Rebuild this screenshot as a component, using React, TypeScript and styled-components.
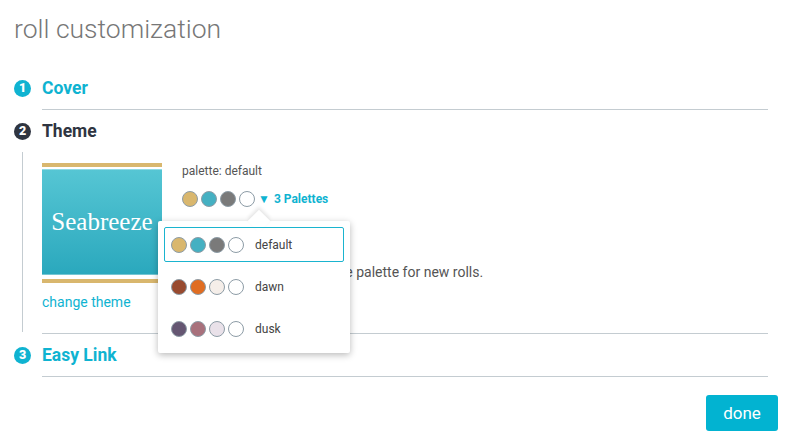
import React from 'react'
import styled, { createGlobalStyle } from 'styled-components'

const GlobalStyle = createGlobalStyle`
  html, body {
    margin: 0;
    padding: 0;
    background: #fff;
  }
  body {
    font-family: Roboto, "Liberation Sans", Arial, sans-serif;
    color: #444;
  }
`

const TEAL = '#0fb3d1'
const DARK = '#2f3541'
const RULE = '#c4ccd1'

const Page = styled.div`
  width: 794px;
  height: 445px;
  box-sizing: border-box;
  padding: 0 16px 0 14px;
  overflow: hidden;
`

const Title = styled.h1`
  margin: 12px 0 21px;
  font-size: 26.5px;
  line-height: 34px;
  font-weight: 300;
  color: #777;
`

const Steps = styled.div`
  margin-right: 10px;
`

const Step = styled.div`
  display: flex;
`

const Rail = styled.div`
  width: 17px;
  margin-right: 11px;
  display: flex;
  flex-direction: column;
  align-items: center;
`

const BadgeCell = styled.div`
  height: 42px;
  display: flex;
  align-items: center;
`

const Badge = styled.div<{ active?: boolean }>`
  width: 17px;
  height: 17px;
  border-radius: 50%;
  background: ${({ active }) => (active ? DARK : TEAL)};
  color: #fff;
  font-size: 12.5px;
  font-weight: 900;
  display: flex;
  align-items: center;
  justify-content: center;
  line-height: 1;
`

const RailLine = styled.div`
  flex: 1;
  width: 1px;
  background: ${RULE};
  margin-bottom: 2px;
`

const StepMain = styled.div`
  flex: 1;
  border-bottom: 1px solid ${RULE};
`

const StepTitle = styled.div<{ active?: boolean }>`
  height: 42px;
  display: flex;
  align-items: center;
  font-size: 17.5px;
  font-weight: 700;
  color: ${({ active }) => (active ? DARK : TEAL)};
`

const StepBody = styled.div`
  display: flex;
  padding: 11px 0 22px;
`

const ThemeCol = styled.div`
  width: 120px;
  margin-right: 20px;
`

const Preview = styled.div`
  height: 120px;
  display: flex;
  flex-direction: column;
`

const GoldBar = styled.div`
  height: 4px;
  background: #d9b76e;
`

const PreviewFace = styled.div`
  flex: 1;
  margin: 2px 0 4px;
  background: linear-gradient(#56c6d4, #2aa8bd);
  box-shadow: inset 0 1px 0 rgba(255, 255, 255, 0.35), inset 0 -1px 0 rgba(255, 255, 255, 0.35);
  display: flex;
  align-items: center;
  justify-content: center;
  color: #fff;
  font-family: "Liberation Serif", "DejaVu Serif", serif;
  font-size: 25px;
`

const ChangeLink = styled.a`
  display: block;
  margin-top: 10px;
  line-height: 18px;
  font-size: 14px;
  color: ${TEAL};
  text-decoration: none;
`

const PaletteCol = styled.div`
  flex: 1;
`

const PaletteLabel = styled.div`
  font-size: 12px;
  line-height: 16px;
  color: #555;
`

const Picker = styled.div`
  position: relative;
  margin-top: 12px;
  display: flex;
  align-items: center;
  height: 16px;
`

const Swatches = styled.div`
  display: flex;
  gap: 3px;
`

const Swatch = styled.span<{ color: string }>`
  width: 16px;
  height: 16px;
  box-sizing: border-box;
  border-radius: 50%;
  border: 1px solid #8d9ca6;
  background: ${({ color }) => color};
`

const Toggle = styled.span`
  margin-left: 3px;
  display: flex;
  align-items: center;
  gap: 4px;
  color: ${TEAL};
  font-size: 12px;
  font-weight: 700;
`

const Caret = styled.span`
  font-size: 12px;
`

const Description = styled.p`
  margin: 56px 0 0;
  font-size: 14px;
  line-height: 18px;
  color: #555;
`

const Popup = styled.div`
  position: absolute;
  left: -24px;
  top: 30px;
  width: 192px;
  box-sizing: border-box;
  padding: 6px 6px 7px;
  background: #fff;
  border-radius: 2px;
  box-shadow: 0 2px 7px rgba(0, 0, 0, 0.28);
  display: flex;
  flex-direction: column;
  gap: 7px;
  z-index: 2;

  &::before {
    content: '';
    position: absolute;
    left: 93px;
    top: -8px;
    width: 16px;
    height: 16px;
    background: #fff;
    transform: rotate(45deg);
    box-shadow: -2px -2px 4px rgba(0, 0, 0, 0.1);
  }
`

const Option = styled.div<{ selected?: boolean }>`
  position: relative;
  height: 35px;
  box-sizing: border-box;
  padding-left: 6px;
  display: flex;
  align-items: center;
  border: 1px solid ${({ selected }) => (selected ? '#1ab4cf' : 'transparent')};
  border-radius: 2px;
  font-size: 12px;
  color: #444;
`

const OptionName = styled.span`
  margin-left: 11px;
`

const ActionRow = styled.div`
  display: flex;
  justify-content: flex-end;
  margin-top: 18px;
`

const DoneButton = styled.button`
  width: 72px;
  height: 36px;
  border: none;
  border-radius: 3px;
  background: #02b3d1;
  color: #fff;
  font-family: Roboto, "Liberation Sans", sans-serif;
  font-size: 17px;
`

const palettes = [
  { name: 'default', colors: ['#d9b76e', '#45b0c2', '#7a7a7a', '#fff'] },
  { name: 'dawn', colors: ['#984a2f', '#e06d22', '#f5eee9', '#fff'] },
  { name: 'dusk', colors: ['#655672', '#a8717c', '#e9e1e9', '#fff'] },
]

function SwatchSet({ colors }: { colors: string[] }) {
  return (
    <Swatches>
      {colors.map((c, i) => (
        <Swatch key={i} color={c} />
      ))}
    </Swatches>
  )
}

export default function App() {
  return (
    <Page>
      <GlobalStyle />
      <Title>roll customization</Title>
      <Steps>
        <Step>
          <Rail>
            <BadgeCell><Badge>1</Badge></BadgeCell>
          </Rail>
          <StepMain>
            <StepTitle>Cover</StepTitle>
          </StepMain>
        </Step>

        <Step>
          <Rail>
            <BadgeCell><Badge active>2</Badge></BadgeCell>
            <RailLine />
          </Rail>
          <StepMain>
            <StepTitle active>Theme</StepTitle>
            <StepBody>
              <ThemeCol>
                <Preview>
                  <GoldBar />
                  <PreviewFace>Seabreeze</PreviewFace>
                  <GoldBar />
                </Preview>
                <ChangeLink>change theme</ChangeLink>
              </ThemeCol>
              <PaletteCol>
                <PaletteLabel>palette: default</PaletteLabel>
                <Picker>
                  <SwatchSet colors={palettes[0].colors} />
                  <Toggle>
                    <Caret>▼</Caret>3 Palettes
                  </Toggle>
                  <Popup>
                    {palettes.map((p, i) => (
                      <Option key={p.name} selected={i === 0}>
                        <SwatchSet colors={p.colors} />
                        <OptionName>{p.name}</OptionName>
                      </Option>
                    ))}
                  </Popup>
                </Picker>
                <Description>This theme will become the palette for new rolls.</Description>
              </PaletteCol>
            </StepBody>
          </StepMain>
        </Step>

        <Step>
          <Rail>
            <BadgeCell><Badge>3</Badge></BadgeCell>
          </Rail>
          <StepMain>
            <StepTitle>Easy Link</StepTitle>
          </StepMain>
        </Step>
      </Steps>
      <ActionRow>
        <DoneButton>done</DoneButton>
      </ActionRow>
    </Page>
  )
}
